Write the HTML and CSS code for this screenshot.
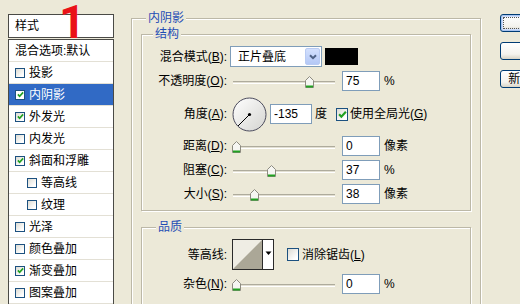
FILE: index.html
```html
<!DOCTYPE html>
<html lang="zh-CN">
<head>
<meta charset="utf-8">
<title>图层样式</title>
<link rel="stylesheet" href="styles.css">
</head>
<body>
<div class="dialog">
  <aside class="styles-panel">
    <div class="styles-head">样式</div>
    <ul class="styles-list">
      <li class="item">混合选项:默认</li>
      <li class="item"><span class="cb"></span>投影</li>
      <li class="item selected"><span class="cb"><svg class="tick" viewBox="0 0 8 8"><path d="M1 3.8 L3 6 L7 1.6"/></svg></span>内阴影</li>
      <li class="item"><span class="cb"><svg class="tick" viewBox="0 0 8 8"><path d="M1 3.8 L3 6 L7 1.6"/></svg></span>外发光</li>
      <li class="item"><span class="cb"></span>内发光</li>
      <li class="item"><span class="cb"><svg class="tick" viewBox="0 0 8 8"><path d="M1 3.8 L3 6 L7 1.6"/></svg></span>斜面和浮雕</li>
      <li class="item sub"><span class="cb"></span>等高线</li>
      <li class="item sub"><span class="cb"></span>纹理</li>
      <li class="item"><span class="cb"></span>光泽</li>
      <li class="item"><span class="cb"></span>颜色叠加</li>
      <li class="item"><span class="cb"><svg class="tick" viewBox="0 0 8 8"><path d="M1 3.8 L3 6 L7 1.6"/></svg></span>渐变叠加</li>
      <li class="item"><span class="cb"></span>图案叠加</li>
    </ul>
    <span class="step">1</span>
  </aside>

  <fieldset class="group outer">
    <legend>内阴影</legend>
    <fieldset class="group section structure">
      <legend>结构</legend>
      <div class="row r-blend">
        <label class="lbl">混合模式(<u>B</u>):</label>
        <div class="combo">
          <span class="combo-text">正片叠底</span>
          <span class="combo-btn"><svg width="8" height="6" viewBox="0 0 8 6"><path d="M1 1.2 L4 4.2 L7 1.2"/></svg></span>
        </div>
        <span class="swatch"></span>
      </div>
      <div class="row">
        <label class="lbl">不透明度(<u>O</u>):</label>
        <div class="slider"><span class="track"></span><svg class="thumb" style="left:75px" viewBox="0 0 9 12"><path class="tb" d="M0.5 4.5 L4.5 0.5 L8.5 4.5 V11.5 H0.5 Z"/><path class="tg" d="M1 10.5 H8"/></svg></div>
        <input class="field" type="text" value="75" readonly>
        <span class="unit">%</span>
      </div>
      <div class="row r-angle">
        <label class="lbl">角度(<u>A</u>):</label>
        <svg class="dial" viewBox="0 0 35 35">
          <defs><linearGradient id="dg" x1="0" y1="0" x2="1" y2="1"><stop offset="0" stop-color="#ffffff"/><stop offset="1" stop-color="#d4d4d0"/></linearGradient></defs>
          <circle cx="17.5" cy="17.5" r="16.5" fill="url(#dg)" stroke="#4b4b5c"/>
          <line x1="17.5" y1="17.5" x2="6" y2="29" stroke="#000" stroke-width="1"/>
          <circle cx="17.5" cy="17.5" r="1.6" fill="#000"/>
        </svg>
        <input class="field wide" type="text" value="-135" readonly>
        <span class="unit">度</span>
        <span class="cb lg"><svg class="tick" viewBox="0 0 8 8"><path d="M1 3.8 L3 6 L7 1.6"/></svg></span>
        <span class="cb-text">使用全局光(<u>G</u>)</span>
      </div>
      <div class="row r-distance">
        <label class="lbl">距离(<u>D</u>):</label>
        <div class="slider"><span class="track"></span><svg class="thumb" style="left:2px" viewBox="0 0 9 12"><path class="tb" d="M0.5 4.5 L4.5 0.5 L8.5 4.5 V11.5 H0.5 Z"/><path class="tg" d="M1 10.5 H8"/></svg></div>
        <input class="field" type="text" value="0" readonly>
        <span class="unit">像素</span>
      </div>
      <div class="row">
        <label class="lbl">阻塞(<u>C</u>):</label>
        <div class="slider"><span class="track"></span><svg class="thumb" style="left:37px" viewBox="0 0 9 12"><path class="tb" d="M0.5 4.5 L4.5 0.5 L8.5 4.5 V11.5 H0.5 Z"/><path class="tg" d="M1 10.5 H8"/></svg></div>
        <input class="field" type="text" value="37" readonly>
        <span class="unit">%</span>
      </div>
      <div class="row">
        <label class="lbl">大小(<u>S</u>):</label>
        <div class="slider"><span class="track"></span><svg class="thumb" style="left:20px" viewBox="0 0 9 12"><path class="tb" d="M0.5 4.5 L4.5 0.5 L8.5 4.5 V11.5 H0.5 Z"/><path class="tg" d="M1 10.5 H8"/></svg></div>
        <input class="field" type="text" value="38" readonly>
        <span class="unit">像素</span>
      </div>
    </fieldset>

    <fieldset class="group section quality">
      <legend>品质</legend>
      <div class="row r-contour">
        <label class="lbl">等高线:</label>
        <svg class="contour" viewBox="0 0 42 31">
          <rect x="0.5" y="0.5" width="41" height="30" fill="#fff" stroke="#2a2a2a"/>
          <rect x="1" y="1" width="29" height="29" fill="#efede4"/>
          <path d="M1 30 L30 1 V30 Z" fill="#aba797"/>
          <line x1="30.5" y1="1" x2="30.5" y2="30" stroke="#2a2a2a"/>
          <path d="M33.5 12.5 H39.5 L36.5 16 Z" fill="#000"/>
        </svg>
        <span class="cb lg aa"></span>
        <span class="cb-text">消除锯齿(<u>L</u>)</span>
      </div>
      <div class="row">
        <label class="lbl">杂色(<u>N</u>):</label>
        <div class="slider"><span class="track"></span><svg class="thumb" style="left:2px" viewBox="0 0 9 12"><path class="tb" d="M0.5 4.5 L4.5 0.5 L8.5 4.5 V11.5 H0.5 Z"/><path class="tg" d="M1 10.5 H8"/></svg></div>
        <input class="field" type="text" value="0" readonly>
        <span class="unit">%</span>
      </div>
    </fieldset>
  </fieldset>

  <div class="buttons">
    <button class="btn default" type="button">确定</button>
    <button class="btn" type="button">取消</button>
    <button class="btn" type="button">新建样式(W)...</button>
  </div>
</div>
</body>
</html>
```

FILE: styles.css
```css
* { box-sizing: border-box; }

html, body {
  margin: 0;
  padding: 0;
  height: 100%;
}

body {
  background: #ece9d8;
  overflow: hidden;
  font-family: "Liberation Sans", Arial, "Noto Sans CJK SC", sans-serif;
  font-size: 12px;
  line-height: 12px;
  color: #000;
}

.dialog {
  display: flex;
  align-items: flex-start;
  height: 304px;
  overflow: hidden;
}

/* ---------- left style list ---------- */
.styles-panel {
  position: relative;
  flex: none;
  width: 106px;
  margin: 14px 0 0 8px;
}

.styles-head {
  height: 24px;
  border: 1px solid #4a4a46;
  background: #fff;
  padding-left: 6px;
  display: flex;
  align-items: center;
}

.styles-list {
  list-style: none;
  margin: 1px 0 0;
  padding: 0;
  height: 290px;
  border: 1px solid #4a4a46;
  border-bottom: none;
  background: #fff;
}

.item {
  height: 22px;
  display: flex;
  align-items: center;
  padding-left: 6px;
  border-bottom: 1px solid #e3e0d5;
  white-space: nowrap;
}

.item.sub { padding-left: 18px; }

.item.selected {
  background: #316ac5;
  color: #fff;
}

.cb {
  flex: none;
  width: 10px;
  height: 10px;
  margin-right: 4px;
  border: 1px solid #1c5180;
  background: linear-gradient(135deg, #dcdbd3, #ffffff 80%);
  display: flex;
  align-items: center;
  justify-content: center;
}

.item.selected .cb { background: #fff; }

.tick {
  width: 7px;
  height: 7px;
  display: block;
}

.tick path {
  fill: none;
  stroke: #21a121;
  stroke-width: 1.9;
}

.step {
  position: absolute;
  left: 51px;
  top: -15px;
  font-family: Roboto, "Open Sans", sans-serif;
  font-weight: 700;
  font-size: 46px;
  line-height: 46px;
  color: #ea1218;
}

/* ---------- group boxes ---------- */
.group {
  margin: 0;
  min-width: 0;
  border: 1px solid #bcb8a7;
  box-shadow: inset 1px 1px 0 #fff, 1px 1px 0 #fff;
}

.group > legend {
  padding: 0 2px;
  font-size: 12px;
  line-height: 12px;
  color: #1f4db5;
  background: #ece9d8;
}

.outer {
  flex: none;
  width: 350px;
  height: 320px;
  margin: 12px 0 0 17px;
  padding: 4px 9px 0;
}

.outer > legend { margin-left: 5px; }

.section {
  padding: 0 0 6px;
}

.structure > legend { margin-left: 11px; }

.quality {
  margin-top: 10px;
  padding-bottom: 40px;
}

.quality > legend { margin-left: 14px; }

/* ---------- rows ---------- */
.row {
  display: flex;
  align-items: center;
  height: 20px;
  margin-top: 4px;
  white-space: nowrap;
}

.r-blend { height: 21px; margin-top: 6px; }
.r-angle { height: 34px; margin-top: 6px; }
.r-distance { margin-top: 5px; }
.r-contour { height: 31px; margin-top: 6px; }

.lbl {
  flex: none;
  width: 88px;
  padding-right: 3px;
  text-align: right;
}

.lbl u, .cb-text u { text-decoration: underline; text-underline-offset: 1px; }

/* combo box */
.combo {
  flex: none;
  width: 92px;
  height: 21px;
  border: 1px solid #7f9db9;
  background: #fff;
  display: flex;
  align-items: center;
  justify-content: space-between;
  padding: 1px;
}

.combo-text { padding-left: 6px; }

.combo-btn {
  width: 15px;
  height: 17px;
  border: 1px solid #b9cbf3;
  border-radius: 2px;
  background: linear-gradient(#d3e0fd, #b4c8f6);
  display: flex;
  align-items: center;
  justify-content: center;
}

.combo-btn path {
  fill: none;
  stroke: #4d6185;
  stroke-width: 2;
}

.swatch {
  flex: none;
  width: 33px;
  height: 17px;
  margin-left: 3px;
  background: #000;
}

/* slider */
.slider {
  position: relative;
  flex: none;
  width: 108px;
  height: 20px;
}

.track {
  position: absolute;
  left: 3px;
  right: 3px;
  top: 10px;
  height: 3px;
  border-top: 1px solid #aeab9c;
  border-bottom: 1px solid #fff;
  background: #e2dfd2;
}

.thumb {
  position: absolute;
  top: 5px;
  width: 9px;
  height: 12px;
}

.thumb .tb {
  fill: #f6f6f2;
  stroke: #8d8b80;
}

.thumb .tg {
  stroke: #21a121;
  stroke-width: 2;
}

/* text fields */
.field {
  flex: none;
  width: 38px;
  height: 20px;
  margin: 0 0 0 4px;
  padding: 0 3px;
  border: 1px solid #7f9db9;
  background: #fff;
  font-family: "Liberation Sans", Arial, sans-serif;
  font-size: 12px;
  color: #000;
  outline: none;
}

.field.wide {
  width: 42px;
  margin-left: 3px;
}

.unit {
  margin-left: 4px;
}

.r-angle .unit { margin-left: 3px; }

.dial {
  flex: none;
  width: 35px;
  height: 35px;
  margin-left: 2px;
}

.cb.lg {
  width: 12px;
  height: 13px;
  margin: 0 2px 0 9px;
}

.cb.lg .tick { width: 9px; height: 9px; }

.cb.aa { margin-left: 13px; margin-right: 3px; }

.contour {
  flex: none;
  width: 42px;
  height: 31px;
  margin-left: 2px;
}

/* ---------- right buttons ---------- */
.buttons {
  flex: none;
  width: 94px;
  margin: 14px 0 0 19px;
  display: flex;
  flex-direction: column;
  gap: 10px;
}

.btn {
  height: 18px;
  padding: 0;
  border: 1px solid #003c74;
  border-radius: 3px;
  background: linear-gradient(#ffffff, #f4f3ee 70%, #d8d4c6);
  font-family: "Liberation Sans", Arial, "Noto Sans CJK SC", sans-serif;
  font-size: 12px;
  line-height: 16px;
  color: #000;
  text-align: center;
  white-space: nowrap;
}

.btn.default {
  box-shadow: inset 0 0 0 1px #a8c4f0, inset 0 0 0 2px #cfdefb;
  outline: 1px dotted #555;
  outline-offset: -4px;
}
```
